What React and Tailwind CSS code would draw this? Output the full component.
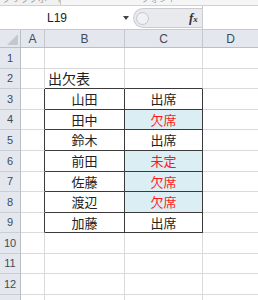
import React from "react";

const rowHeights = [21, 20, 21, 20, 21, 21, 20, 21, 20, 21, 20, 21, 20];

const table = {
  3: ["山田", "出席", false],
  4: ["田中", "欠席", true],
  5: ["鈴木", "出席", false],
  6: ["前田", "未定", true],
  7: ["佐藤", "欠席", true],
  8: ["渡辺", "欠席", true],
  9: ["加藤", "出席", false],
};

function Row({ n, h }) {
  const inTable = n >= 3 && n <= 9;
  const data = table[n];
  const hClass = h === 21 ? "h-[21px]" : "h-[20px]";
  return (
    <div className={`flex ${hClass}`}>
      <div className="w-[21px] shrink-0 bg-[#e4e8ee] border-r border-b border-r-[#b9bfc8] border-b-[#c9ced6] flex items-center justify-center text-[11px] text-[#3d4a5c] font-['Liberation_Sans',sans-serif]">
        {n <= 12 ? n : null}
      </div>
      <div
        className={`w-[24px] shrink-0 border-b border-r border-b-[#dadada] ${
          inTable ? "border-r-[#3a3a3a]" : "border-r-[#dadada]"
        }`}
      />
      <div
        className={`w-[80px] shrink-0 border-r border-b flex ${
          inTable
            ? "border-[#3a3a3a] items-center justify-center"
            : n === 2
            ? "border-r-[#dadada] border-b-[#3a3a3a] items-end pl-[3px] pb-[2px]"
            : "border-[#dadada]"
        } text-[13px] leading-[16px] text-[#222]`}
      >
        {n === 2 ? <span className="text-[14px]">出欠表</span> : data ? data[0] : null}
      </div>
      <div
        className={`w-[78px] shrink-0 border-r border-b flex items-center justify-center text-[13px] leading-[16px] ${
          inTable ? "border-[#3a3a3a]" : n === 2 ? "border-r-[#dadada] border-b-[#3a3a3a]" : "border-[#dadada]"
        } ${data && data[2] ? "bg-[#daeef3] text-[#ff1a1a]" : "text-[#222]"}`}
      >
        {data ? data[1] : null}
      </div>
      <div className="flex-1 border-b border-b-[#dadada]" />
    </div>
  );
}

export default function App() {
  return (
    <div className="w-[258px] h-[300px] overflow-hidden bg-white font-['Noto_Sans_CJK_JP',sans-serif]">
      {/* ribbon strip */}
      <div className="h-[6px] flex bg-[#f1f1f1] border-b border-[#d2d2d2] overflow-hidden">
        <div className="w-[61px] border-r border-[#c8c8c8] relative overflow-hidden">
          <span className="absolute left-[2px] top-[-6px] text-[9px] leading-[10px] text-[#9a9a9a] whitespace-nowrap">
            クリップボード　⌐
          </span>
        </div>
        <div className="flex-1 relative overflow-hidden bg-[#f5f5f5]">
          <span className="absolute left-[80px] top-[-6px] text-[9px] leading-[10px] text-[#a5a5a5] whitespace-nowrap">
            フォント
          </span>
        </div>
      </div>
      {/* formula bar */}
      <div className="h-[24px] flex border-b border-[#c6cbd2] bg-white">
        <div className="w-[133px] shrink-0 relative flex items-center">
          <span className="absolute left-[47px] top-[4px] text-[12px] leading-[16px] text-[#222] font-['Liberation_Sans',sans-serif]">
            L19
          </span>
          <svg className="absolute left-[123px] top-[10px]" width="6" height="4" viewBox="0 0 6 4">
            <path d="M0 0 L6 0 L3 4 Z" fill="#444" />
          </svg>
        </div>
        <div className="w-[69px] shrink-0 mt-[2px] mb-[1px] rounded-l-full bg-[#e8eaed] border border-r-0 border-[#c9cdd3] relative flex items-center">
          <div className="absolute left-[2px] top-[3px] w-[13px] h-[13px] rounded-full border border-[#c4c8ce] bg-[#eff1f3]" />
          <span className="absolute left-[55px] top-[1px] text-[13px] leading-[16px] italic font-bold text-[#333] font-['Liberation_Serif',serif]">
            f<span className="text-[9px]">x</span>
          </span>
        </div>
        <div className="flex-1 border-l border-[#c9cdd3] bg-white" />
      </div>
      {/* column headers */}
      <div className="h-[18px] flex bg-[#e4e8ee] border-b border-[#b9bfc8] text-[12px] text-[#3d4a5c] font-['Liberation_Sans',sans-serif]">
        <div className="w-[21px] shrink-0 border-r border-[#b9bfc8] relative">
          <svg className="absolute right-[2px] bottom-[2px]" width="11" height="11" viewBox="0 0 11 11">
            <path d="M11 0 L11 11 L0 11 Z" fill="#c3c8cf" />
          </svg>
        </div>
        <div className="w-[24px] shrink-0 border-r border-[#c3c8cf] flex items-center justify-center">A</div>
        <div className="w-[80px] shrink-0 border-r border-[#c3c8cf] flex items-center justify-center">B</div>
        <div className="w-[78px] shrink-0 border-r border-[#c3c8cf] flex items-center justify-center">C</div>
        <div className="flex-1 flex items-center justify-center">D</div>
      </div>
      {rowHeights.map((h, i) => (
        <Row key={i} n={i + 1} h={h} />
      ))}
    </div>
  );
}
